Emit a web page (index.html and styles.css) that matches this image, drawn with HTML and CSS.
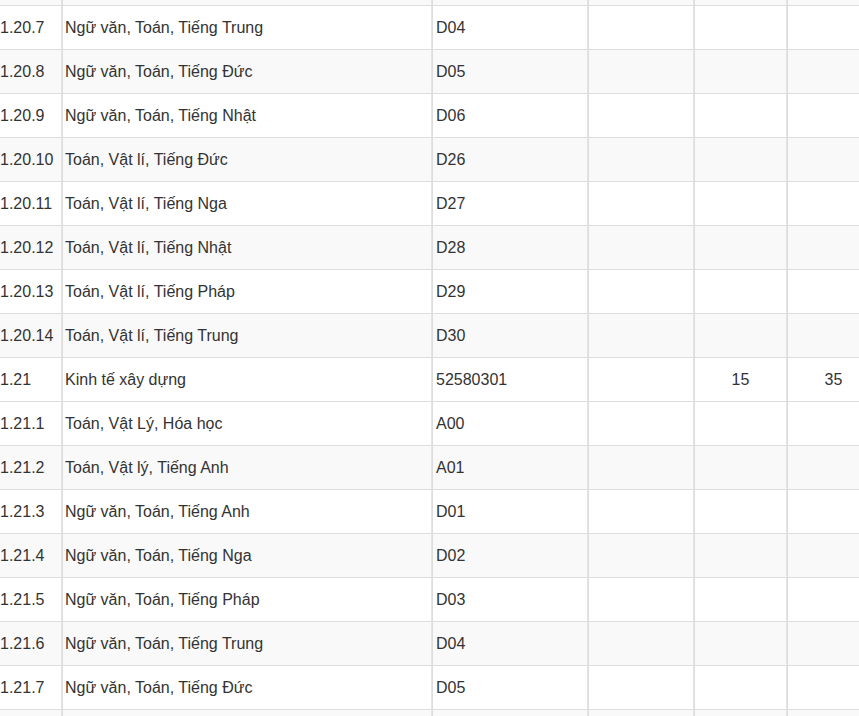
FILE: index.html
```html
<!DOCTYPE html>
<html lang="vi">
<head>
<meta charset="utf-8">
<link rel="stylesheet" href="styles.css">
</head>
<body>
<div class="viewport">
<table class="grid">
<colgroup>
<col class="c1"><col class="c2"><col class="c3"><col class="c4"><col class="c5"><col class="c6">
</colgroup>
<tbody>
<tr class="alt"><td>1.20.6</td><td>Ngữ văn, Toán, Tiếng Pháp</td><td class="code">D03</td><td></td><td></td><td></td></tr>
<tr><td>1.20.7</td><td>Ngữ văn, Toán, Tiếng Trung</td><td class="code">D04</td><td></td><td></td><td></td></tr>
<tr class="alt"><td>1.20.8</td><td>Ngữ văn, Toán, Tiếng Đức</td><td class="code">D05</td><td></td><td></td><td></td></tr>
<tr><td>1.20.9</td><td>Ngữ văn, Toán, Tiếng Nhật</td><td class="code">D06</td><td></td><td></td><td></td></tr>
<tr class="alt"><td>1.20.10</td><td>Toán, Vật lí, Tiếng Đức</td><td class="code">D26</td><td></td><td></td><td></td></tr>
<tr><td>1.20.11</td><td>Toán, Vật lí, Tiếng Nga</td><td class="code">D27</td><td></td><td></td><td></td></tr>
<tr class="alt"><td>1.20.12</td><td>Toán, Vật lí, Tiếng Nhật</td><td class="code">D28</td><td></td><td></td><td></td></tr>
<tr><td>1.20.13</td><td>Toán, Vật lí, Tiếng Pháp</td><td class="code">D29</td><td></td><td></td><td></td></tr>
<tr class="alt"><td>1.20.14</td><td>Toán, Vật lí, Tiếng Trung</td><td class="code">D30</td><td></td><td></td><td></td></tr>
<tr><td>1.21</td><td>Kinh tế xây dựng</td><td class="code">52580301</td><td></td><td class="num">15</td><td class="num">35</td></tr>
<tr><td>1.21.1</td><td>Toán, Vật Lý, Hóa học</td><td class="code">A00</td><td></td><td></td><td></td></tr>
<tr class="alt"><td>1.21.2</td><td>Toán, Vật lý, Tiếng Anh</td><td class="code">A01</td><td></td><td></td><td></td></tr>
<tr><td>1.21.3</td><td>Ngữ văn, Toán, Tiếng Anh</td><td class="code">D01</td><td></td><td></td><td></td></tr>
<tr class="alt"><td>1.21.4</td><td>Ngữ văn, Toán, Tiếng Nga</td><td class="code">D02</td><td></td><td></td><td></td></tr>
<tr><td>1.21.5</td><td>Ngữ văn, Toán, Tiếng Pháp</td><td class="code">D03</td><td></td><td></td><td></td></tr>
<tr class="alt"><td>1.21.6</td><td>Ngữ văn, Toán, Tiếng Trung</td><td class="code">D04</td><td></td><td></td><td></td></tr>
<tr><td>1.21.7</td><td>Ngữ văn, Toán, Tiếng Đức</td><td class="code">D05</td><td></td><td></td><td></td></tr>
<tr class="alt"><td>1.21.8</td><td>Ngữ văn, Toán, Tiếng Nhật</td><td class="code">D06</td><td></td><td></td><td></td></tr>
</tbody>
</table>
</div>
</body>
</html>
```

FILE: styles.css
```css
html, body {
  margin: 0;
  padding: 0;
  background: #ffffff;
}
.viewport {
  width: 859px;
  height: 716px;
  overflow: hidden;
}
.grid {
  table-layout: fixed;
  border-collapse: separate;
  border-spacing: 0;
  width: 880px;
  margin-top: -38px;
  font-family: "Liberation Sans", Arial, sans-serif;
  font-size: 16px;
  color: #333333;
}
.c1 { width: 62px; }
.c2 { width: 370px; }
.c3 { width: 156px; }
.c4 { width: 106px; }
.c5 { width: 93px; }
.c6 { width: 93px; }
.grid td {
  box-sizing: border-box;
  height: 44px;
  padding: 0 0 0 2px;
  vertical-align: middle;
  border-bottom: 1px solid #dddddd;
  border-left: 1px solid #dddddd;
  border-right: 1px solid #e4e4e4;
  white-space: nowrap;
  overflow: hidden;
}
.grid td:first-child {
  border-left: 0;
  padding-left: 0;
}
.grid td.code {
  padding-left: 3px;
}
.grid tr.alt td {
  background: #f9f9f9;
}
.grid td.num {
  text-align: center;
  padding-left: 0;
}
```
